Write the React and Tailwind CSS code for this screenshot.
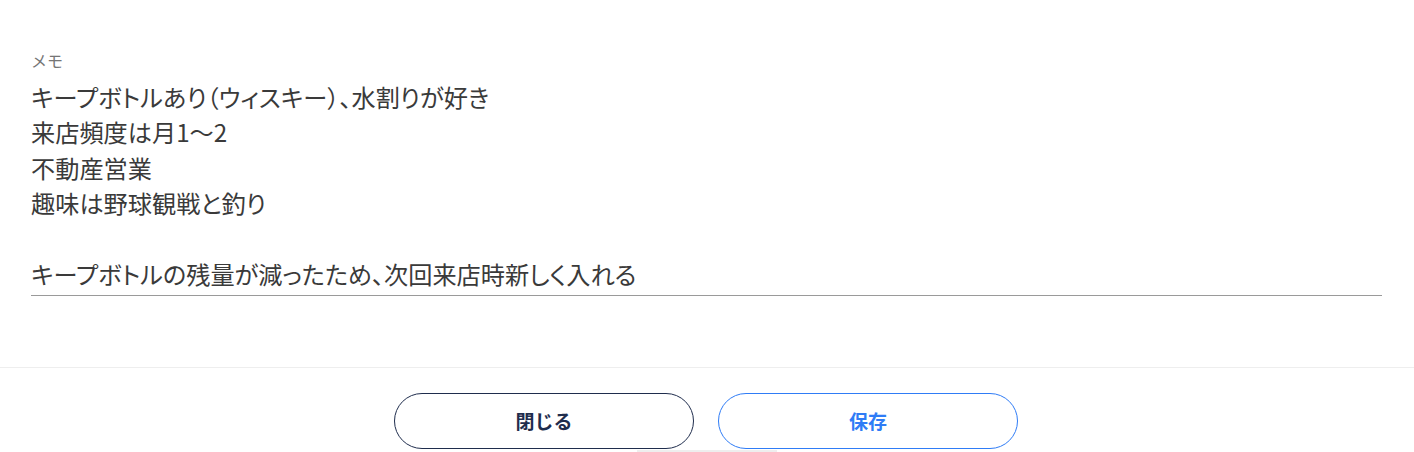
export default function App() {
  const memo = [
    'キープボトルあり（ウィスキー）、水割りが好き',
    '来店頻度は月1〜2',
    '不動産営業',
    '趣味は野球観戦と釣り',
    '',
    'キープボトルの残量が減ったため、次回来店時新しく入れる',
  ];

  return (
    <div className="w-full h-[452px] bg-white overflow-hidden flex flex-col font-['Noto_Sans_CJK_JP',sans-serif]">
      {/* Memo field */}
      <div className="pl-[31px] pr-[32px] pt-[49px]">
        <div className="text-[16px] leading-[22px] text-[#757575]">メモ</div>
        <div className="mt-[8px] pb-[4px] border-b border-[#9a9a9a] text-[24.2px] leading-[35.4px] text-[#3a3a3a] [font-feature-settings:'palt']">
          {memo.map((line, i) => (
            <div key={i} className="h-[35.4px]">{line}</div>
          ))}
        </div>
      </div>

      {/* Footer */}
      <div className="mt-[71px] border-t border-[#eeeeee] flex flex-col items-center">
        <div className="flex gap-[24px] pt-[25px] pr-[2px]">
          <button className="w-[300px] h-[56px] rounded-full border-[1.5px] border-[#1f2d4d] bg-white text-[#1f2d4d] text-[19px] font-bold">
            閉じる
          </button>
          <button className="w-[300px] h-[56px] rounded-full border-[1.5px] border-[#2f7cf6] bg-white text-[#2f7cf6] text-[19px] font-bold">
            保存
          </button>
        </div>
        <div className="mt-[1px] w-[140px] h-[3px] bg-[#eeeeee]" />
      </div>
    </div>
  );
}
